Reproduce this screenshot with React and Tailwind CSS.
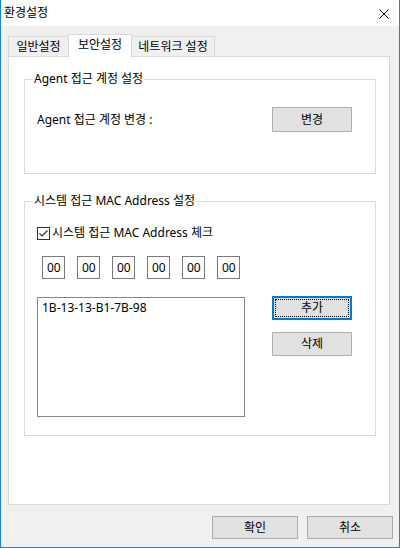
import React from "react";

const Btn = ({ children, className = "" }) => (
  <button className={`flex items-center justify-center bg-[#e1e1e1] border border-[#adadad] text-[12px] leading-[16px] text-black ${className}`}>
    {children}
  </button>
);

const MacBox = () => (
  <div className="w-[23px] h-[23px] border border-[#7a7a7a] bg-white flex items-center pl-[4px] text-[12px] leading-[16px]">
    00
  </div>
);

export default function App() {
  return (
    <div className="w-[400px] h-[548px] flex flex-col border-x border-b border-[#1883d7] bg-[#f0f0f0] text-black font-['Noto_Sans','Noto_Sans_CJK_KR',sans-serif]">
      {/* title bar */}
      <div className="h-[26px] bg-white flex items-center justify-between pl-[3px] pr-[10px]">
        <span className="text-[12px] leading-[16px]">환경설정</span>
        <svg width="10" height="10" viewBox="0 0 10 10" className="mt-[1px]">
          <path d="M0.5 0.5 L9.5 9.5 M9.5 0.5 L0.5 9.5" stroke="#000" strokeWidth="1" />
        </svg>
      </div>

      <div className="flex-1 flex flex-col pt-[8px]">
        {/* tabs */}
        <div className="flex items-end h-[22px] ml-[7px]">
          <div className="w-[60px] h-[20px] border-t border-l border-[#d9d9d9] flex items-center justify-center text-[12px] leading-[16px]">
            일반설정
          </div>
          <div className="relative z-10 w-[64px] h-[23px] -mb-px bg-white border-x border-t border-[#d9d9d9] flex items-center justify-center pb-[2px] text-[12px] leading-[16px]">
            보안설정
          </div>
          <div className="w-[83px] h-[20px] border-t border-r border-[#d9d9d9] flex items-center justify-center text-[12px] leading-[16px]">
            네트워크 설정
          </div>
        </div>

        {/* tab panel */}
        <div className="ml-[7px] w-[382px] h-[449px] bg-white border border-[#d9d9d9] pl-[15px] pt-[14px]">
          <fieldset className="w-[352px] border border-[#dcdcdc] px-[8px] pb-[41px]">
            <legend className="px-px text-[12px] leading-[16px]">Agent 접근 계정 설정</legend>
            <div className="flex items-center justify-between pl-[4px] pr-[15px] mt-[20px]">
              <span className="text-[12px] leading-[16px]">Agent 접근 계정 변경 :</span>
              <Btn className="w-[80px] h-[25px]">변경</Btn>
            </div>
          </fieldset>

          <fieldset className="w-[352px] mt-[19px] border border-[#dcdcdc] px-[8px] pb-[18px]">
            <legend className="px-px text-[12px] leading-[16px]">시스템 접근 MAC Address 설정</legend>
            <div className="flex items-center gap-[2px] pl-[4px] mt-[16px]">
              <svg width="13" height="13" viewBox="0 0 13 13">
                <rect x="0.5" y="0.5" width="12" height="12" fill="#fff" stroke="#333" />
                <path d="M2.5 6.5 L5 9 L10.5 3.5" fill="none" stroke="#333" strokeWidth="1.2" />
              </svg>
              <span className="text-[12px] leading-[16px]">시스템 접근 MAC Address 체크</span>
            </div>
            <div className="flex gap-[12px] pl-[9px] mt-[15px]">
              <MacBox />
              <MacBox />
              <MacBox />
              <MacBox />
              <MacBox />
              <MacBox />
            </div>
            <div className="flex items-start justify-between pl-[4px] pr-[15px] mt-[17px]">
              <div className="mt-px w-[208px] h-[120px] border border-[#828790] bg-white pl-[4px] pt-[2px] text-[12px] leading-[16px]">
                1B-13-13-B1-7B-98
              </div>
              <div className="flex flex-col gap-[12px]">
                <button className="w-[80px] h-[24px] bg-[#e1e1e1] border-2 border-[#0078d7] p-px">
                  <span className="w-full h-full flex items-center justify-center border border-dotted border-black text-[12px] leading-[16px]">
                    추가
                  </span>
                </button>
                <Btn className="w-[80px] h-[24px]">삭제</Btn>
              </div>
            </div>
          </fieldset>
        </div>

        {/* footer */}
        <div className="flex justify-end gap-[9px] pr-[6px] mt-[11px]">
          <Btn className="w-[86px] h-[23px]">확인</Btn>
          <Btn className="w-[86px] h-[23px]">취소</Btn>
        </div>
      </div>
    </div>
  );
}
